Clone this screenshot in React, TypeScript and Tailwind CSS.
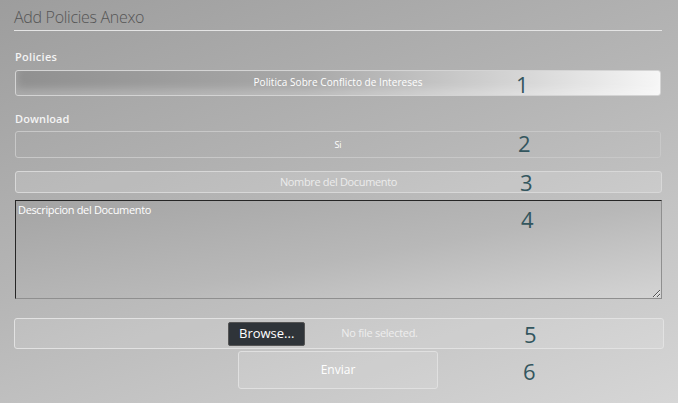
import React from "react";

function Num({ n, className }: { n: string; className: string }) {
  return (
    <span
      className={`pointer-events-none absolute text-[22px] leading-none text-[#33565e] ${className}`}
    >
      {n}
    </span>
  );
}

export default function App() {
  return (
    <div className="h-[403px] w-[678px] overflow-hidden bg-[linear-gradient(160deg,#9d9d9d_0%,#b5b5b5_45%,#d6d6d6_100%)] font-['Open_Sans',sans-serif]">
      <div className="flex flex-col px-[14px] pt-[7px]">
        {/* Title */}
        <h2 className="mr-[2px] border-b border-[#e4e4e4] pb-[3px] text-[16px] font-light leading-[20px] tracking-[-0.3px] text-[#555]">
          Add Policies Anexo
        </h2>

        {/* Policies */}
        <div className="mt-[18px] pl-[1px] text-[11px] font-semibold tracking-[0.3px] text-[#f4f4f4]">
          Policies
        </div>
        <div className="relative mt-[4px] ml-[1px] mr-[3px] flex h-[26px] items-center justify-center rounded-[3px] border border-[#d4d4d4] bg-[linear-gradient(90deg,#909090_0%,#a8a8a8_45%,#d8d8d8_80%,#f6f6f6_100%)] text-[10px] tracking-[0.05px] text-white shadow-[inset_0_-6px_8px_rgba(255,255,255,0.25)]">
          Politica Sobre Conflicto de Intereses
          <Num n="1" className="left-[500px] top-[2px]" />
        </div>

        {/* Download */}
        <div className="mt-[15px] pl-[1px] text-[11px] font-semibold tracking-[0.1px] text-[#f4f4f4]">
          Download
        </div>
        <div className="relative mt-[4px] ml-[1px] mr-[3px] flex h-[27px] items-center justify-center rounded-[3px] border border-[#c8c8c8] text-[9px] text-white">
          Si
          <Num n="2" className="left-[502px] top-[0px]" />
        </div>

        {/* Nombre */}
        <div className="relative mt-[13px] ml-[1px] mr-[2px] flex h-[22px] items-center justify-center rounded-[3px] border border-[#d8d8d8] bg-white/15 text-[11px] tracking-[-0.35px] text-[#ececec]">
          Nombre del Documento
          <Num n="3" className="left-[504px] top-[-1px]" />
        </div>

        {/* Descripcion */}
        <div className="relative mt-[7px] ml-[1px] mr-[2px]">
          <textarea
            placeholder="Descripcion del Documento"
            className="block h-[99px] w-full resize-y border border-b-[#8f8f8f] border-l-[#262626] border-r-[#8f8f8f] border-t-[#262626] bg-[linear-gradient(170deg,#a4a4a4_0%,#b8b8b8_55%,#d4d4d4_100%)] px-[2px] py-[2px] text-[11px] leading-[14px] tracking-[-0.35px] text-white outline-none placeholder:text-white"
          />
          <Num n="4" className="left-[506px] top-[8px]" />
        </div>

        {/* File */}
        <div className="relative mt-[19px] flex h-[31px] items-center rounded-[3px] border border-[#e2e2e2] bg-white/10">
          <div className="ml-[213px] flex h-[24px] items-center rounded-[2px] border border-[#555] bg-[#2f3439] px-[10px] text-[13px] text-white">
            Browse...
          </div>
          <span className="ml-[36px] text-[11px] tracking-[-0.3px] text-[#eeeeee]">
            No file selected.
          </span>
          <Num n="5" className="left-[509px] top-[4px]" />
        </div>

        {/* Enviar */}
        <div className="relative flex">
          <button className="ml-[224px] mt-[2px] flex h-[38px] w-[200px] items-center justify-center rounded-[3px] border border-[#e0e0e0] bg-white/10 text-[12px] text-white">
            Enviar
          </button>
          <Num n="6" className="left-[509px] top-[11px]" />
        </div>
      </div>
    </div>
  );
}
